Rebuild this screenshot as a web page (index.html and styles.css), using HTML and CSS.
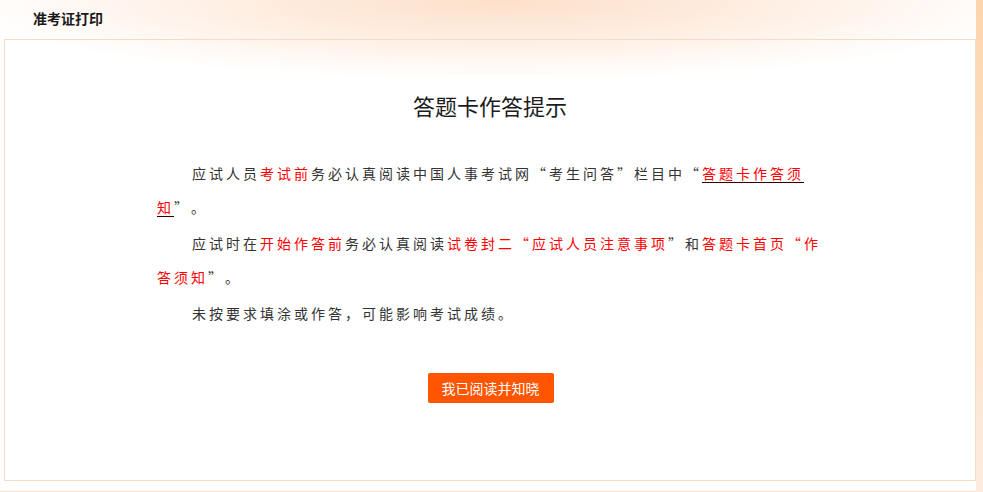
FILE: index.html
```html
<!DOCTYPE html>
<html lang="zh-CN">
<head>
<meta charset="utf-8">
<title>准考证打印</title>
<link rel="stylesheet" href="styles.css">
</head>
<body>
<div class="page">
  <div class="main">
    <div class="top"><span class="top-title">准考证打印</span></div>
    <div class="box">
      <h1 class="title">答题卡作答提示</h1>
      <div class="content">
        <p>应试人员<span class="red">考试前</span>务必认真阅读中国人事考试网“考生问答”栏目中“<a class="link"><span class="red">答题卡作答须知</span></a>”。</p>
        <p>应试时在<span class="red">开始作答前</span>务必认真阅读<span class="red">试卷封二“应试人员注意事项</span>”和<span class="red">答题卡首页“作答须知</span>”。</p>
        <p>未按要求填涂或作答，可能影响考试成绩。</p>
      </div>
      <div class="actions"><button class="btn" type="button">我已阅读并知晓</button></div>
    </div>
    <div class="foot-line"></div>
  </div>
  <div class="strip"></div>
</div>
</body>
</html>
```

FILE: styles.css
```css
html, body {
  margin: 0;
  padding: 0;
  background: #fff;
}
body {
  font-family: "Noto Sans CJK SC", "Liberation Sans", sans-serif;
  width: 983px;
  height: 492px;
  overflow: hidden;
}
.page {
  display: flex;
  height: 492px;
}
.main {
  width: 976px;
  display: flex;
  flex-direction: column;
  background:
    radial-gradient(ellipse 540px 80px at 500px 0, #fde0c9 0%, #feebdd 40%, #fff5ee 70%, rgba(255,255,255,0) 100%),
    #fff;
}
.top {
  height: 39px;
  display: flex;
  align-items: center;
  padding-left: 33px;
}
.top-title {
  font-size: 14px;
  font-weight: bold;
  color: #1a1a1a;
  line-height: 16px;
  margin-top: -4px;
}
.box {
  margin-left: 4px;
  width: 972px;
  height: 442px;
  border: 1px solid #f5dcc2;
  border-right-color: #f3ddc8;
  padding-top: 50px;
  box-sizing: border-box;
}
.title {
  margin: 0;
  font-size: 22px;
  font-weight: normal;
  color: #1c1c1c;
  text-align: center;
  line-height: 30px;
}
.content {
  width: 666px;
  margin: 36px auto 0;
  font-size: 14px;
  line-height: 34px;
  letter-spacing: 3px;
  color: #333;
  text-spacing-trim: space-all;
}
.content p {
  margin: 0 0 2px;
  text-indent: 35px;
}
.red {
  color: #ff0000;
}
.link {
  text-decoration: underline;
  text-decoration-color: #330000;
  text-underline-offset: 3px;
}
.actions {
  display: flex;
  justify-content: center;
  margin-top: 43px;
  padding-left: 1px;
}
.btn {
  width: 126px;
  height: 30px;
  border: none;
  border-radius: 2px;
  background: #ff5500;
  color: #fff;
  font-family: "Noto Sans CJK SC", "Liberation Sans", sans-serif;
  font-size: 14px;
  padding: 0;
}
.foot-line {
  margin-top: 10px;
  height: 1px;
  background: #fbe5d1;
}
.strip {
  width: 7px;
  height: 492px;
  background: linear-gradient(#fcd5ad, #fde3c9 60%, #fdece0);
}
```
